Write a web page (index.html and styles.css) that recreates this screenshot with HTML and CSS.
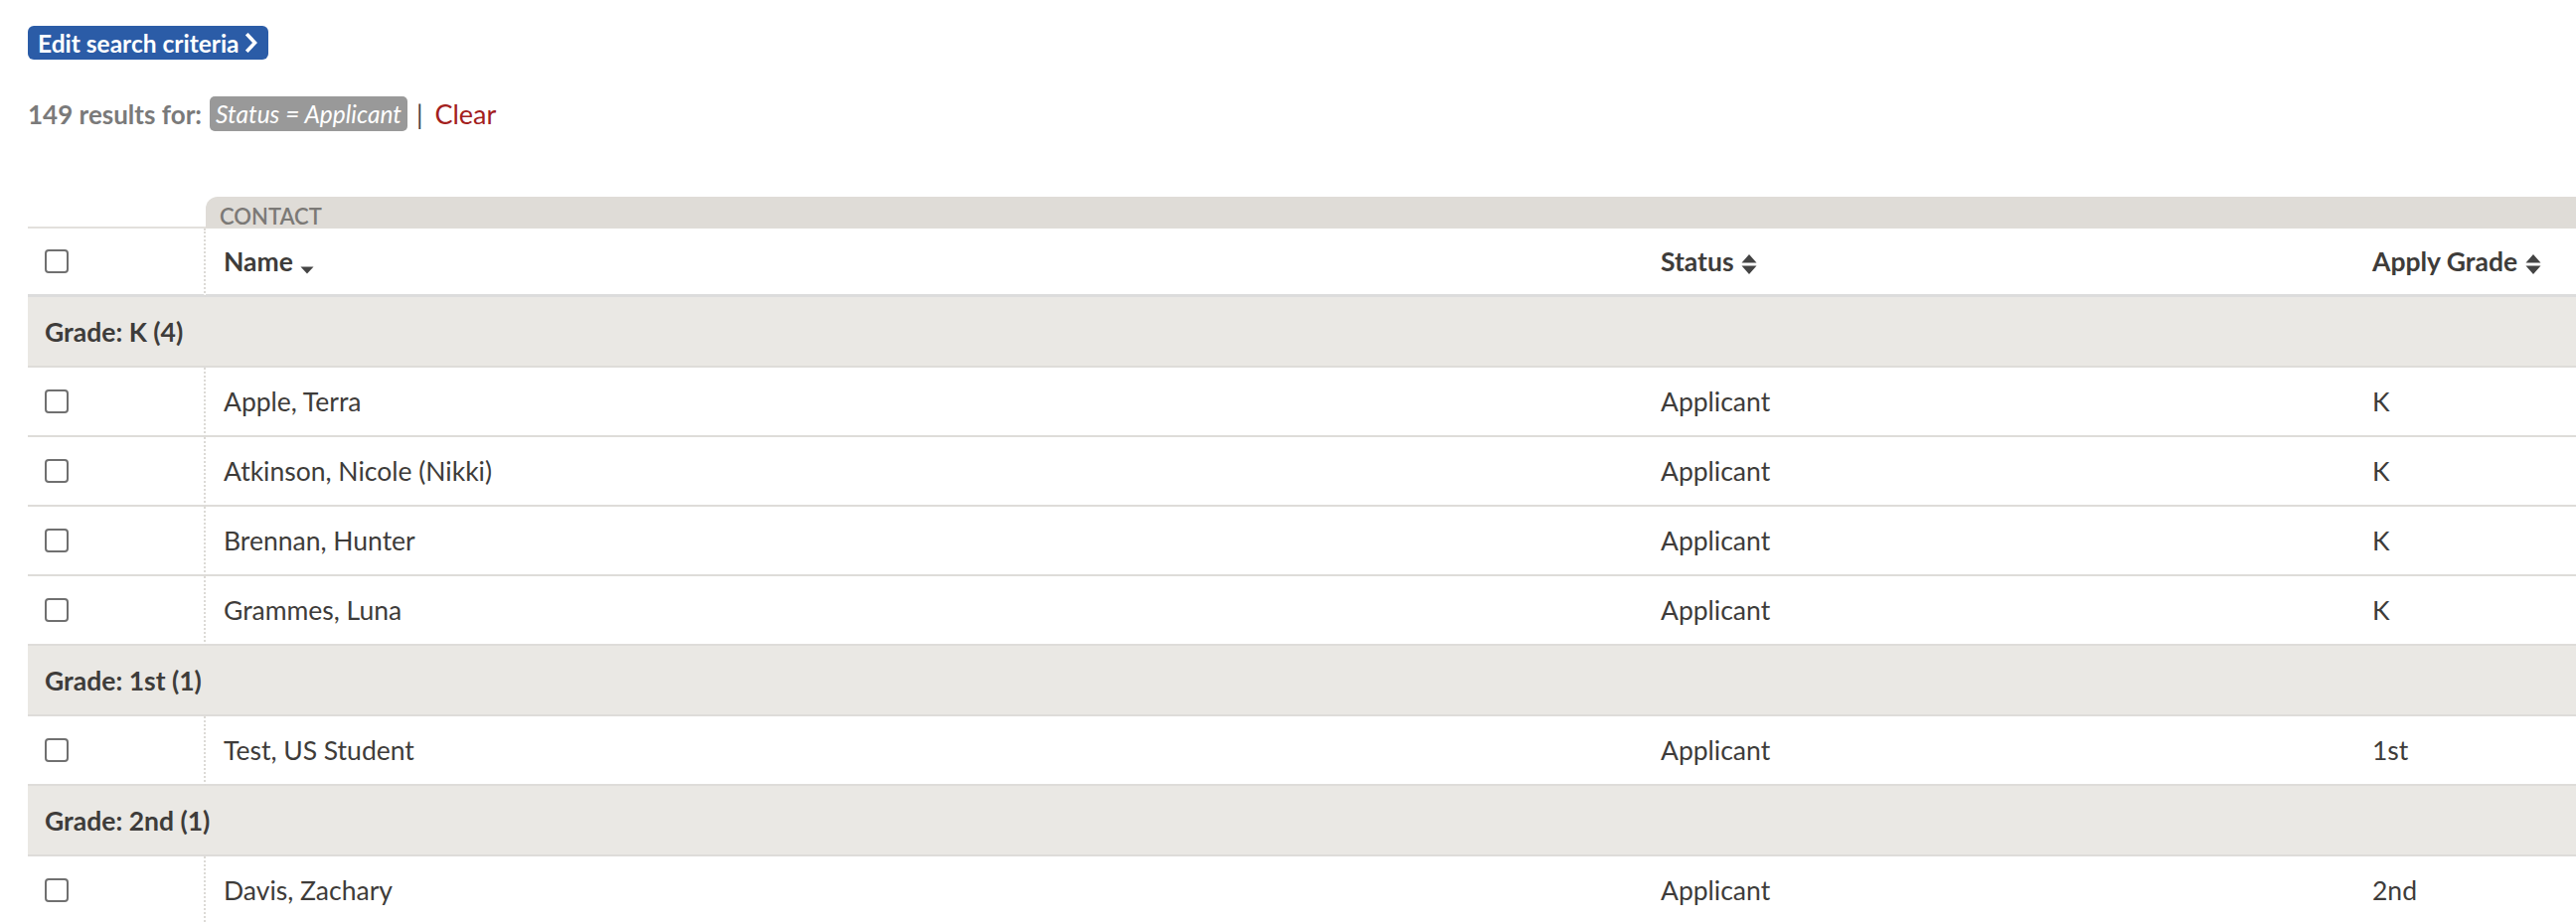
FILE: index.html
```html
<!DOCTYPE html>
<html lang="en">
<head>
    <meta charset="UTF-8">
    <meta name="viewport" content="width=device-width, initial-scale=1.0">
    <title>Search Results</title>
    <link rel="stylesheet" href="styles.css">
</head>
<body>
    <div class="page">
        <a href="#" class="edit-btn">
            Edit search criteria
            <svg class="chevron" width="13" height="20" viewBox="0 0 13 20"><path d="M2.5 2.5 L9.5 10 L2.5 17.5" fill="none" stroke="#fff" stroke-width="3.6" stroke-linecap="square"/></svg>
        </a>

        <div class="results-line">
            <span class="results-count">149 results for:</span>
            <span class="criteria-badge">Status = Applicant</span>
            <span class="separator">|</span>
            <a href="#" class="clear-link">Clear</a>
        </div>

        <table class="results-table">
            <colgroup>
                <col class="col-check">
                <col class="col-name">
                <col class="col-status">
                <col class="col-grade">
            </colgroup>
            <thead>
                <tr class="section-row">
                    <th class="section-blank"></th>
                    <th class="section-tab" colspan="3">Contact</th>
                </tr>
                <tr class="header-row">
                    <th class="check-cell"><input type="checkbox" class="row-check"></th>
                    <th>Name <svg class="sort-icon caret" width="14" height="8" viewBox="0 0 14 8"><path d="M0.5 0.5 L13.5 0.5 L7 7.5 Z" fill="#444"/></svg></th>
                    <th>Status <svg class="sort-icon" width="16" height="22" viewBox="0 0 16 22"><path d="M0.5 9.5 L15.5 9.5 L8 1 Z M0.5 12.5 L15.5 12.5 L8 21 Z" fill="#444"/></svg></th>
                    <th>Apply Grade <svg class="sort-icon" width="16" height="22" viewBox="0 0 16 22"><path d="M0.5 9.5 L15.5 9.5 L8 1 Z M0.5 12.5 L15.5 12.5 L8 21 Z" fill="#444"/></svg></th>
                </tr>
            </thead>
            <tbody>
                <tr class="grade-row"><td colspan="4">Grade: K (4)</td></tr>
                <tr>
                    <td class="check-cell"><input type="checkbox" class="row-check"></td>
                    <td>Apple, Terra</td>
                    <td>Applicant</td>
                    <td>K</td>
                </tr>
                <tr>
                    <td class="check-cell"><input type="checkbox" class="row-check"></td>
                    <td>Atkinson, Nicole (Nikki)</td>
                    <td>Applicant</td>
                    <td>K</td>
                </tr>
                <tr>
                    <td class="check-cell"><input type="checkbox" class="row-check"></td>
                    <td>Brennan, Hunter</td>
                    <td>Applicant</td>
                    <td>K</td>
                </tr>
                <tr>
                    <td class="check-cell"><input type="checkbox" class="row-check"></td>
                    <td>Grammes, Luna</td>
                    <td>Applicant</td>
                    <td>K</td>
                </tr>
                <tr class="grade-row"><td colspan="4">Grade: 1st (1)</td></tr>
                <tr>
                    <td class="check-cell"><input type="checkbox" class="row-check"></td>
                    <td>Test, US Student</td>
                    <td>Applicant</td>
                    <td>1st</td>
                </tr>
                <tr class="grade-row"><td colspan="4">Grade: 2nd (1)</td></tr>
                <tr>
                    <td class="check-cell"><input type="checkbox" class="row-check"></td>
                    <td>Davis, Zachary</td>
                    <td>Applicant</td>
                    <td>2nd</td>
                </tr>
            </tbody>
        </table>
    </div>
</body>
</html>
```

FILE: styles.css
```css
html, body {
    overflow: hidden;
}

body {
    margin: 0;
    font-family: Lato, 'Open Sans', sans-serif;
    color: #3e3c3a;
    background-color: white;
}

.page {
    padding: 26px 0 0 28px;
}

.edit-btn {
    display: inline-flex;
    align-items: center;
    gap: 6px;
    height: 34px;
    padding: 0 10px;
    box-sizing: border-box;
    background-color: #2b5ca7;
    color: white;
    font-size: 24.5px;
    font-weight: 700;
    border-radius: 6px;
    text-decoration: none;
}

.results-line {
    display: flex;
    align-items: center;
    margin-top: 37px;
    height: 35px;
    font-size: 26px;
}

.results-count {
    color: #7a7a7a;
    font-weight: 700;
}

.criteria-badge {
    margin-left: 8px;
    height: 35px;
    line-height: 35px;
    padding: 0 6px;
    background-color: #999;
    color: white;
    font-style: italic;
    font-size: 24.5px;
    border-radius: 5px;
}

.separator {
    margin: 0 12px 0 9px;
    color: #444;
}

.clear-link {
    color: #a3201d;
    text-decoration: none;
    font-size: 27px;
}

.results-table {
    margin-top: 66px;
    width: 2700px;
    border-collapse: separate;
    border-spacing: 0;
    table-layout: fixed;
    font-size: 26.5px;
}

.col-check { width: 179px; }
.col-name { width: 1446px; }
.col-status { width: 716px; }

.results-table th,
.results-table td {
    text-align: left;
    padding: 0 18px;
    height: 68px;
    border-bottom: 2px solid #dedcd9;
    white-space: nowrap;
}

.results-table th {
    font-weight: 700;
}

.section-row th {
    height: 30px;
    padding: 0;
    border-bottom: none;
}

.section-blank {
    border-bottom: 2px solid #e3e0dc !important;
}

.section-tab {
    background-color: #dfdcd7;
    border-top-left-radius: 12px;
    color: #7b7976;
    font-size: 22px;
    font-weight: 600 !important;
    text-transform: uppercase;
    vertical-align: bottom;
    padding-left: 14px !important;
    line-height: 24px;
}

.header-row th {
    height: 66px;
    border-bottom: 3px solid #dcdcdc;
}

.check-cell {
    padding-left: 17px !important;
    border-right: 2px dotted #dcdad6;
}

.row-check {
    appearance: none;
    display: block;
    width: 24px;
    height: 24px;
    margin: 0;
    border: 2px solid #707070;
    border-radius: 4px;
    background-color: white;
}

.sort-icon {
    vertical-align: middle;
    margin-left: 1px;
}

.sort-icon.caret {
    vertical-align: -3px;
}

.grade-row td {
    background-color: #eae8e4;
    font-weight: 700;
    padding-left: 17px;
    height: 69px;
}
```
